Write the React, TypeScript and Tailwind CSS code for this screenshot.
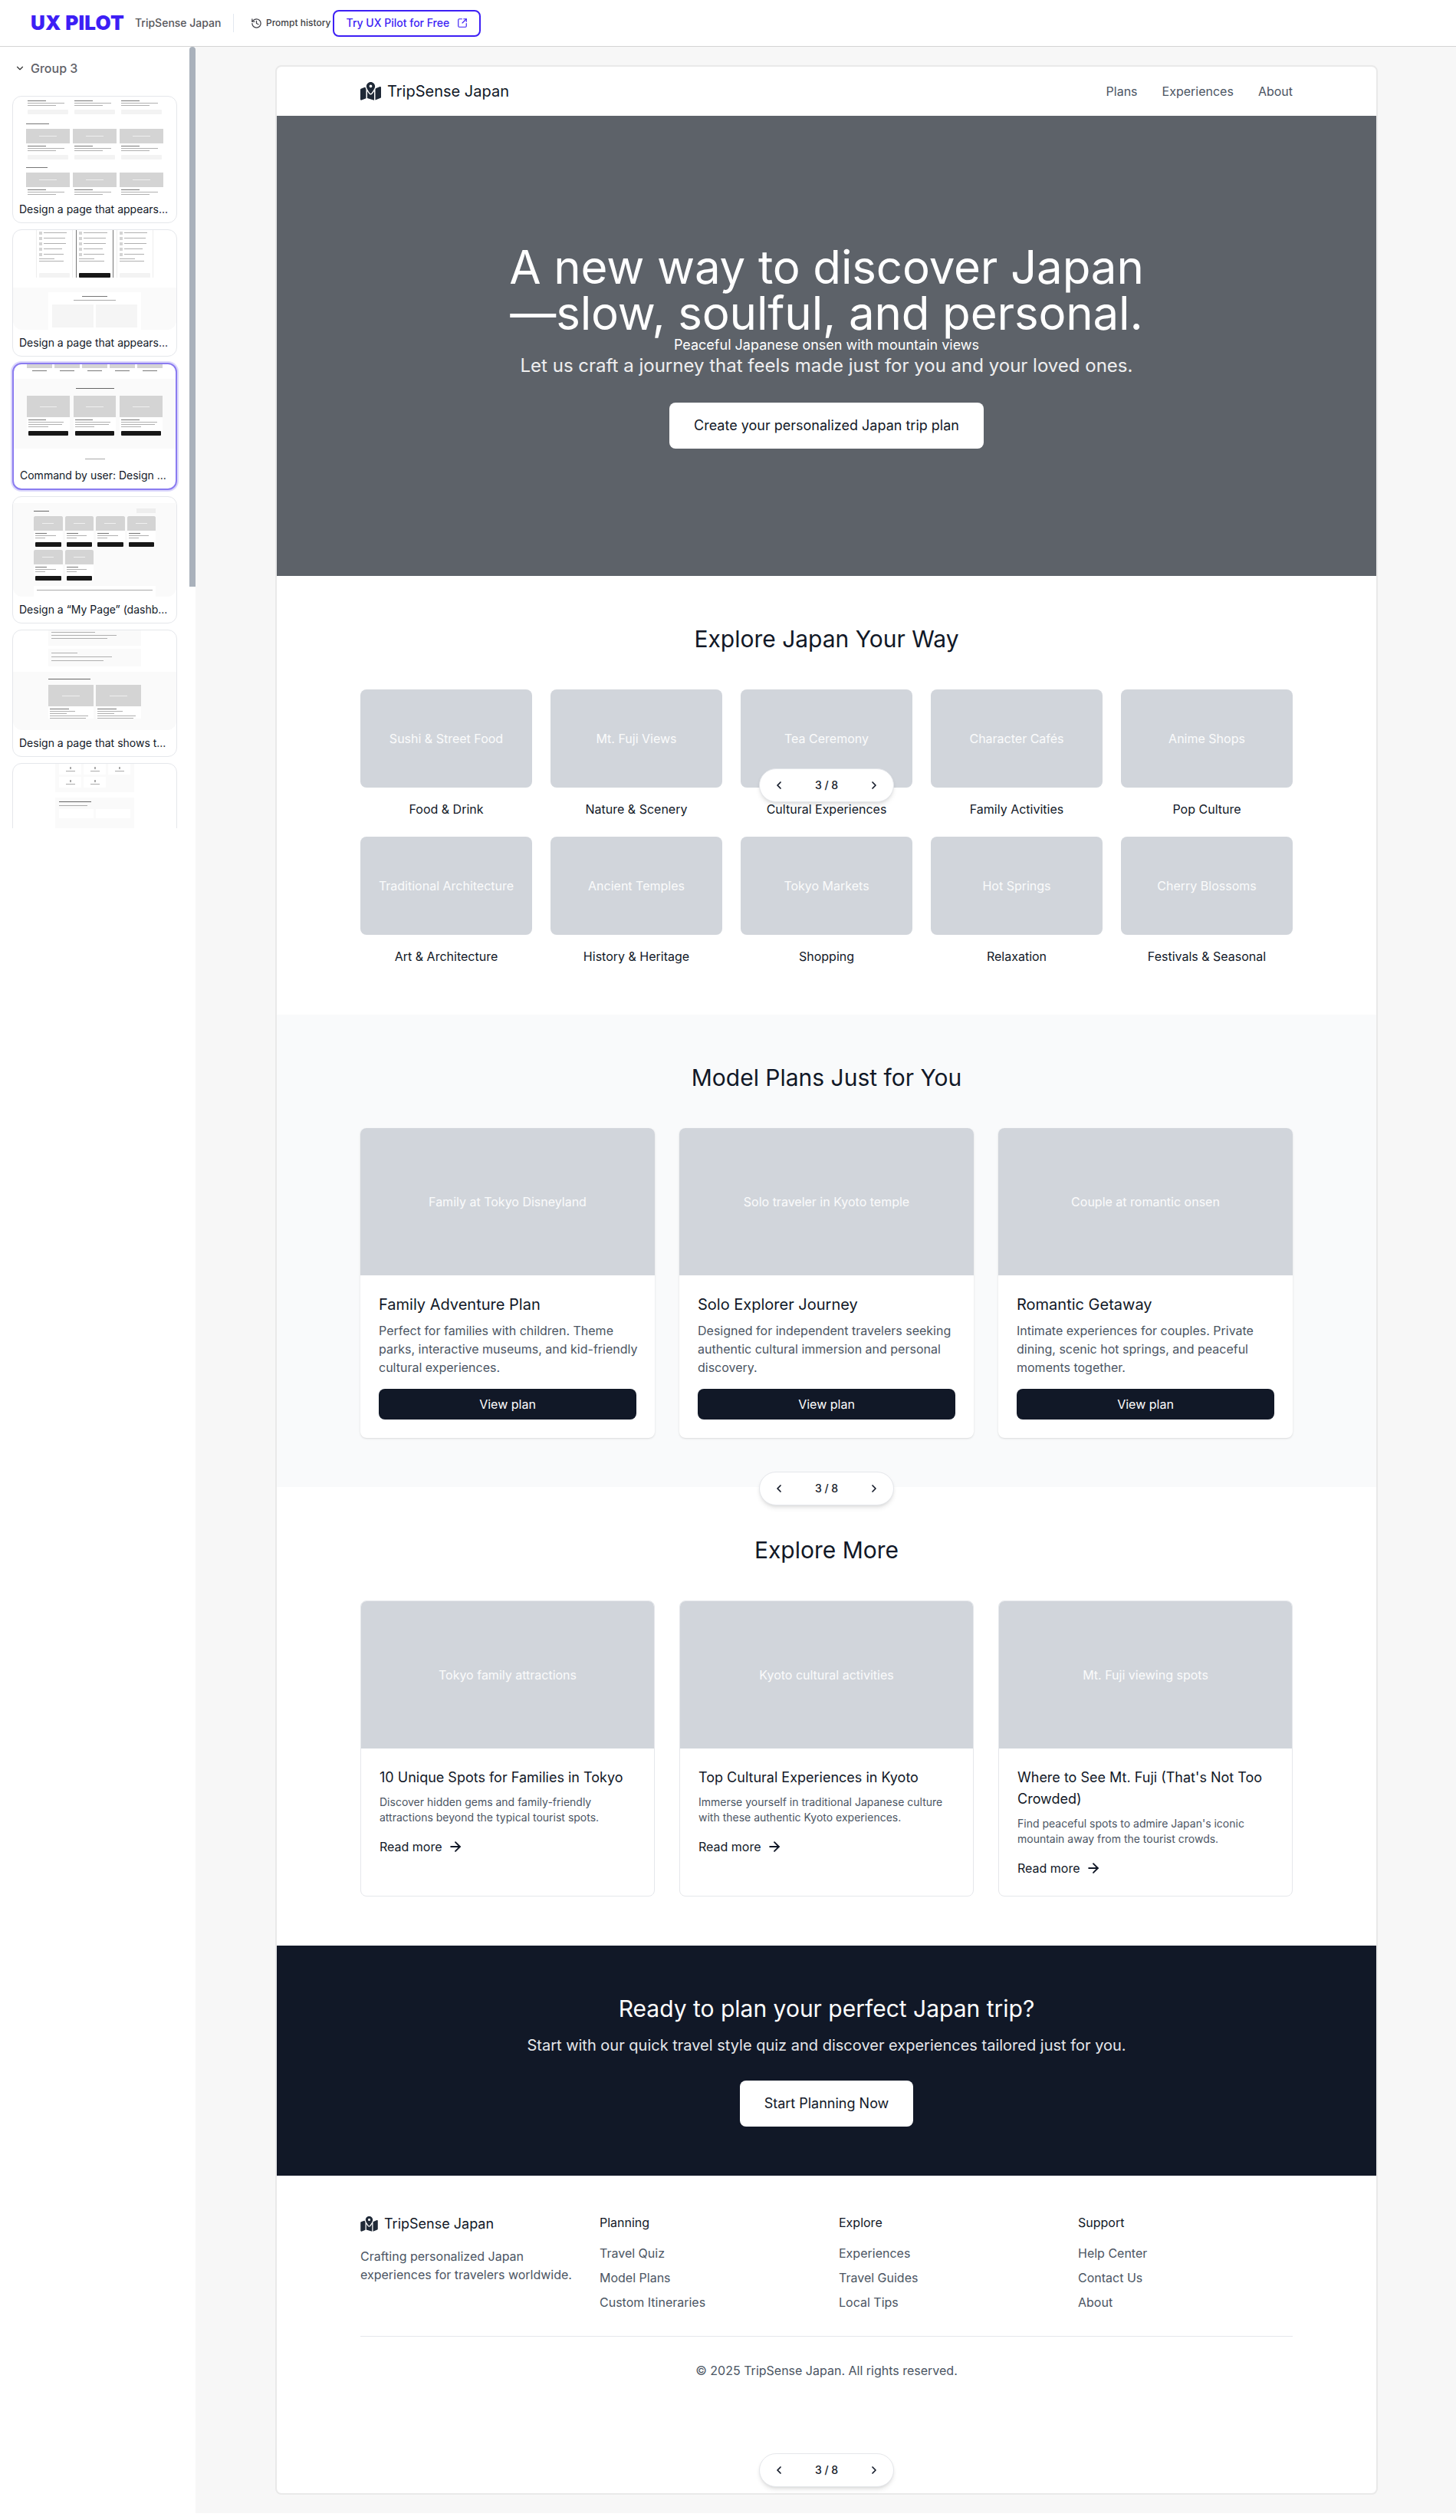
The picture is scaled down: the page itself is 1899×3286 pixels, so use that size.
import { ArrowRight, ChevronDown, ChevronLeft, ChevronRight, History, SquareArrowOutUpRight } from 'lucide-react';
import { FaMapLocationDot } from 'react-icons/fa6';

// tiny stand-ins for the text inside the sidebar previews
function Bars({ rows, className = '' }: { rows: string[]; className?: string }) {
  return (
    <div className={`flex flex-col gap-[2px] ${className}`}>
      {rows.map((w, i) => (
        <div key={i} className="h-px bg-[#b0b0b0]" style={{ width: w }} />
      ))}
    </div>
  );
}

function MiniCard({ img, btn, rows = ['90%', '70%'], dark }: { img?: string; btn?: boolean; rows?: string[]; dark?: boolean }) {
  return (
    <div className="bg-white min-w-0">
      {img && <div className={`bg-[#d4d4d4] flex items-center justify-center ${img}`}><div className="h-px w-[40%] bg-[#f0f0f0]" /></div>}
      <div className="px-[2px] pt-[3px]">
        <div className="h-px w-[45%] bg-[#777] mb-[2px]" />
        <Bars rows={rows} />
        {btn && <div className={`h-[6px] mt-[5px] rounded-[1px] ${dark ? 'bg-[#171717]' : 'bg-[#f3f3f3]'}`} />}
      </div>
    </div>
  );
}

function ThumbOne() {
  return (
    <div className="px-[17px] flex flex-col">
      <div className="grid grid-cols-3 gap-[4px] pt-[2px]">
        <MiniCard btn />
        <MiniCard btn />
        <MiniCard btn />
      </div>
      <div className="h-px w-[30px] bg-[#777] mt-[12px]" />
      <div className="grid grid-cols-3 gap-[4px] mt-[6px]">
        <MiniCard img="h-[19px]" btn />
        <MiniCard img="h-[19px]" btn />
        <MiniCard img="h-[19px]" btn />
      </div>
      <div className="h-px w-[28px] bg-[#777] mt-[10px]" />
      <div className="grid grid-cols-3 gap-[4px] mt-[6px]">
        <MiniCard img="h-[19px]" />
        <MiniCard img="h-[19px]" />
        <MiniCard img="h-[19px]" />
      </div>
    </div>
  );
}

function PriceCol({ dark }: { dark?: boolean }) {
  return (
    <div className={`px-[3px] flex flex-col h-[62px] ${dark ? 'border-x border-[#777]' : 'border-x border-[#eee]'}`}>
      {['75%', '70%', '72%', '60%', '65%'].map((w, i) => (
        <div key={i} className="flex items-center gap-[2px] h-[7px]">
          <div className="w-[4px] h-[4px] bg-[#d4d4d4]" />
          <div className="h-px bg-[#b0b0b0]" style={{ width: w }} />
        </div>
      ))}
      <Bars rows={['50%', '80%']} className="mt-[2px]" />
      <div className={`h-[6px] mt-auto rounded-[1px] ${dark ? 'bg-[#171717]' : 'bg-[#f3f3f3]'}`} />
    </div>
  );
}

function ThumbTwo() {
  return (
    <div className="flex flex-col h-full">
      <div className="grid grid-cols-3 gap-[4px] px-[30px] h-[75px]">
        <PriceCol />
        <PriceCol dark />
        <PriceCol />
      </div>
      <div className="bg-[#fafafa] flex-1 rounded-b-xl px-[46px] pt-[6px]">
        <div className="bg-white h-full px-[5px] pt-[5px]">
          <div className="h-px w-[30%] bg-[#777] mx-auto" />
          <div className="h-px w-[50%] bg-[#aaa] mx-auto mt-[4px]" />
          <div className="grid grid-cols-2 gap-[3px] mt-[5px]">
            <div className="bg-[#f5f5f5] h-[30px]" />
            <div className="bg-[#f5f5f5] h-[30px]" />
          </div>
        </div>
      </div>
    </div>
  );
}

function ThumbThree() {
  const Item = () => (
    <div className="min-w-0">
      <div className="h-[5px] bg-[#d4d4d4]" />
      <div className="h-px w-[60%] bg-[#777] mx-auto mt-[3px]" />
    </div>
  );
  return (
    <div className="flex flex-col h-full">
      <div className="grid grid-cols-5 gap-[3px] px-[17px] h-[19px]">
        <Item />
        <Item />
        <Item />
        <Item />
        <Item />
      </div>
      <div className="bg-[#fafafa] px-[17px] h-[91px] pt-[12px]">
        <div className="h-px w-[50px] bg-[#666] mx-auto" />
        <div className="grid grid-cols-3 gap-[5px] mt-[9px]">
          <MiniCard img="h-[28px]" btn dark rows={['90%', '85%', '50%']} />
          <MiniCard img="h-[28px]" btn dark rows={['90%', '85%', '50%']} />
          <MiniCard img="h-[28px]" btn dark rows={['90%', '85%', '50%']} />
        </div>
      </div>
      <div className="h-px w-[26px] bg-[#aaa] mx-auto mt-[13px]" />
    </div>
  );
}

function ThumbFour() {
  return (
    <div className="flex flex-col h-full">
      <div className="h-[15px]" />
      <div className="bg-[#fafafa] flex-1 rounded-b-xl px-[27px] pt-[7px]">
        <div className="flex items-center justify-between h-[6px]">
          <div className="h-px w-[20px] bg-[#666]" />
          <div className="h-[6px] w-[25px] bg-[#eee]" />
        </div>
        <div className="grid grid-cols-4 gap-x-[3px] gap-y-[4px] mt-[4px]">
          {[0, 1, 2, 3, 4, 5].map((i) => (
            <MiniCard key={i} img="h-[19px] rounded-t-[2px]" btn dark rows={['80%', '40%']} />
          ))}
        </div>
        <div className="bg-white h-[14px] mt-[7px] px-[4px] pt-[5px]">
          <div className="h-px w-full bg-[#aaa]" />
        </div>
      </div>
    </div>
  );
}

function ThumbFive() {
  return (
    <div className="flex flex-col h-full">
      <div className="px-[46px]">
        <div className="bg-[#fafafa] h-[20px] px-[4px] pt-[2px]">
          <Bars rows={['50%', '75%', '65%']} className="gap-[3px]" />
        </div>
        <div className="bg-[#fafafa] h-[23px] mt-[4px] px-[4px] pt-[5px]">
          <Bars rows={['30%', '70%', '60%']} className="gap-[4px]" />
        </div>
      </div>
      <div className="bg-[#fafafa] flex-1 rounded-b-xl mt-[7px] px-[46px] pt-[9px]">
        <div className="h-px w-[55px] bg-[#666]" />
        <div className="grid grid-cols-2 gap-[3px] mt-[7px]">
          <MiniCard img="h-[28px]" rows={['60%', '40%', '90%', '85%']} />
          <MiniCard img="h-[28px]" rows={['60%', '40%', '90%', '85%']} />
        </div>
      </div>
    </div>
  );
}

function ThumbSix() {
  return (
    <div className="px-[55px]">
      <div className="bg-[#fafafa] px-[5px] pb-[6px] grid grid-cols-3 gap-[3px]">
        {[0, 1, 2, 3, 4].map((i) => (
          <div key={i} className="bg-white h-[14px] flex flex-col items-center justify-center gap-[2px]">
            <div className="h-[3px] w-[2px] bg-[#aaa]" />
            <div className="h-px w-[12px] bg-[#aaa]" />
          </div>
        ))}
      </div>
      <div className="bg-[#fafafa] mt-[7px] px-[5px] pt-[5px] h-[40px]">
        <div className="h-px w-[45%] bg-[#666]" />
        <div className="h-px w-[40%] bg-[#aaa] mt-[4px]" />
        <div className="grid grid-cols-2 gap-[3px] mt-[4px]">
          <div className="bg-white h-[12px]" />
          <div className="bg-white h-[12px]" />
        </div>
      </div>
    </div>
  );
}

function Thumb({ caption, active, children }: { caption: string; active?: boolean; children: React.ReactNode }) {
  return (
    <div
      className={`w-[215px] h-[166px] shrink-0 rounded-xl bg-white overflow-hidden flex flex-col ${
        active ? 'border-2 border-[#8b7cf0] ring-2 ring-[#dcd8fb]' : 'border border-[#e5e7eb]'
      }`}
    >
      <div className="h-[130px] overflow-hidden">{children}</div>
      <div className="px-2 h-[34px] flex items-center text-sm text-[#111827] whitespace-nowrap">{caption}</div>
    </div>
  );
}

function Sidebar() {
  return (
    <aside className="relative w-[255px] h-[1019px] shrink-0 bg-white overflow-hidden px-4">
      <div className="flex items-center gap-[7px] h-[28px] pl-[3px] mt-[14px] text-base font-medium text-[#5f6168]">
        <ChevronDown className="w-[14px] h-[14px] text-[#333]" />
        Group 3
      </div>
      <div className="flex flex-col gap-2 mt-[22px]">
        <Thumb caption="Design a page that appears..."><ThumbOne /></Thumb>
        <Thumb caption="Design a page that appears..."><ThumbTwo /></Thumb>
        <Thumb caption="Command by user: Design ..." active><ThumbThree /></Thumb>
        <Thumb caption="Design a “My Page” (dashb..."><ThumbFour /></Thumb>
        <Thumb caption="Design a page that shows t..."><ThumbFive /></Thumb>
        <Thumb caption=""><ThumbSix /></Thumb>
      </div>
      <div className="absolute right-0 top-0 w-2 h-[704px] rounded-t-full rounded-b-sm bg-[#a9b1bb]" />
    </aside>
  );
}

function TopBar() {
  return (
    <header className="h-[61px] bg-white border-b border-[#d4d4d4] flex items-center pl-10">
      <span className="text-[26px] font-black text-[#3d1ff5] tracking-[0.01em] w-[136px] leading-none">UX PILOT</span>
      <span className="text-sm font-medium text-[#57575b] w-[128px]">TripSense Japan</span>
      <div className="w-px h-6 bg-[#e2e8f0]" />
      <History className="w-[15px] h-[15px] text-[#3f3f46] ml-[22px]" />
      <span className="text-xs font-medium text-[#3f3f46] ml-[5px]">Prompt history</span>
      <div className="ml-[3px] w-[193px] h-[35px] rounded-lg border-2 border-[#3d1ff5] flex items-center justify-center gap-[10px] text-sm font-medium text-[#3d1ff5]">
        Try UX Pilot for Free
        <SquareArrowOutUpRight className="w-[14px] h-[14px]" />
      </div>
    </header>
  );
}

function Pager({ className }: { className: string }) {
  return (
    <div className={`absolute left-1/2 -translate-x-1/2 w-[176px] h-[44px] rounded-full bg-white border border-[#e5e7eb] shadow-md flex items-center justify-between px-[17px] text-sm font-medium text-[#111827] ${className}`}>
      <ChevronLeft className="w-4 h-4" strokeWidth={2.5} />
      <span>3 / 8</span>
      <ChevronRight className="w-4 h-4" strokeWidth={2.5} />
    </div>
  );
}

function Placeholder({ label, className }: { label: string; className: string }) {
  return <div className={`bg-[#d1d5db] flex items-center justify-center text-white/90 ${className}`}>{label}</div>;
}

const categories = [
  ['Sushi & Street Food', 'Food & Drink'],
  ['Mt. Fuji Views', 'Nature & Scenery'],
  ['Tea Ceremony', 'Cultural Experiences'],
  ['Character Cafés', 'Family Activities'],
  ['Anime Shops', 'Pop Culture'],
  ['Traditional Architecture', 'Art & Architecture'],
  ['Ancient Temples', 'History & Heritage'],
  ['Tokyo Markets', 'Shopping'],
  ['Hot Springs', 'Relaxation'],
  ['Cherry Blossoms', 'Festivals & Seasonal'],
];

const plans = [
  ['Family at Tokyo Disneyland', 'Family Adventure Plan', 'Perfect for families with children. Theme parks, interactive museums, and kid-friendly cultural experiences.'],
  ['Solo traveler in Kyoto temple', 'Solo Explorer Journey', 'Designed for independent travelers seeking authentic cultural immersion and personal discovery.'],
  ['Couple at romantic onsen', 'Romantic Getaway', 'Intimate experiences for couples. Private dining, scenic hot springs, and peaceful moments together.'],
];

const guides = [
  ['Tokyo family attractions', '10 Unique Spots for Families in Tokyo', 'Discover hidden gems and family-friendly attractions beyond the typical tourist spots.'],
  ['Kyoto cultural activities', 'Top Cultural Experiences in Kyoto', 'Immerse yourself in traditional Japanese culture with these authentic Kyoto experiences.'],
  ['Mt. Fuji viewing spots', "Where to See Mt. Fuji (That's Not Too Crowded)", "Find peaceful spots to admire Japan's iconic mountain away from the tourist crowds."],
];

const footerCols = [
  ['Planning', 'Travel Quiz', 'Model Plans', 'Custom Itineraries'],
  ['Explore', 'Experiences', 'Travel Guides', 'Local Tips'],
  ['Support', 'Help Center', 'Contact Us', 'About'],
];

function Preview() {
  return (
    <div className="relative w-[1438px] bg-white border-2 border-[#e9e9e9] rounded-lg overflow-hidden text-[#111827]">
      <nav className="h-[64px] flex items-center justify-between px-[109px]">
        <div className="flex items-center gap-2 text-xl">
          <FaMapLocationDot className="w-[27px] h-6 text-[#1f2937]" />
          TripSense Japan
        </div>
        <div className="flex gap-8 text-[#4b5563]">
          <span>Plans</span>
          <span>Experiences</span>
          <span>About</span>
        </div>
      </nav>

      {/* hero */}
      <section className="h-[600px] bg-[#5d6269] flex flex-col items-center justify-center text-white text-center">
        <h1 className="text-6xl leading-[60px] tracking-[-0.15px] w-[896px]">A new way to discover Japan —slow, soulful, and personal.</h1>
        <p className="text-lg leading-[23px]">Peaceful Japanese onsen with mountain views</p>
        <p className="text-2xl text-white/90 mb-8">Let us craft a journey that feels made just for you and your loved ones.</p>
        <div className="bg-white text-[#111827] text-lg px-8 py-4 rounded-lg">Create your personalized Japan trip plan</div>
      </section>

      {/* categories */}
      <section className="py-16 px-[109px]">
        <h2 className="text-3xl text-center mb-12">Explore Japan Your Way</h2>
        <div className="grid grid-cols-5 gap-6">
          {categories.map(([img, label]) => (
            <div key={label} className="text-center">
              <Placeholder label={img} className="h-32 rounded-lg mb-4" />
              <div>{label}</div>
            </div>
          ))}
        </div>
      </section>

      {/* plans */}
      <section className="py-16 px-[109px] bg-[#f9fafb]">
        <h2 className="text-3xl text-center mb-12">Model Plans Just for You</h2>
        <div className="grid grid-cols-3 gap-8">
          {plans.map(([img, title, text]) => (
            <div key={title} className="bg-white rounded-lg shadow-sm overflow-hidden">
              <Placeholder label={img} className="h-48" />
              <div className="p-6">
                <h3 className="text-xl leading-7 mb-2">{title}</h3>
                <p className="text-[#4b5563] mb-4 -mr-1">{text}</p>
                <div className="h-10 rounded-lg bg-[#111827] text-white flex items-center justify-center">View plan</div>
              </div>
            </div>
          ))}
        </div>
      </section>

      {/* guides */}
      <section className="py-16 px-[109px]">
        <h2 className="text-3xl text-center mb-12">Explore More</h2>
        <div className="grid grid-cols-3 gap-8">
          {guides.map(([img, title, text]) => (
            <div key={title} className="bg-white rounded-lg border border-[#e5e7eb] overflow-hidden">
              <Placeholder label={img} className="h-48" />
              <div className="p-6">
                <h3 className="text-lg mb-2">{title}</h3>
                <p className="text-sm text-[#4b5563] mb-4">{text}</p>
                <div className="flex items-center gap-[7px]">
                  Read more
                  <ArrowRight className="w-5 h-5" strokeWidth={2.25} />
                </div>
              </div>
            </div>
          ))}
        </div>
      </section>

      {/* cta */}
      <section className="py-16 bg-[#111827] text-white text-center flex flex-col items-center">
        <h2 className="text-3xl mb-4">Ready to plan your perfect Japan trip?</h2>
        <p className="text-xl leading-7 text-[#e5e7eb] mb-8">Start with our quick travel style quiz and discover experiences tailored just for you.</p>
        <div className="bg-white text-[#111827] text-lg px-8 py-4 rounded-lg">Start Planning Now</div>
      </section>

      {/* footer */}
      <footer className="px-[109px] pt-[49px] pb-[148px]">
        <div className="grid grid-cols-4 gap-8">
          <div>
            <div className="flex items-center gap-2 text-lg mb-4">
              <FaMapLocationDot className="w-[23px] h-5 text-[#1f2937]" />
              TripSense Japan
            </div>
            <p className="text-[#4b5563]">Crafting personalized Japan experiences for travelers worldwide.</p>
          </div>
          {footerCols.map(([head, ...links]) => (
            <div key={head}>
              <h4 className="mb-4">{head}</h4>
              <div className="flex flex-col gap-2 text-[#4b5563]">
                {links.map((l) => (
                  <span key={l}>{l}</span>
                ))}
              </div>
            </div>
          ))}
        </div>
        <div className="border-t border-[#e5e7eb] mt-8 pt-8 text-center text-[#4b5563]">© 2025 TripSense Japan. All rights reserved.</div>
      </footer>

      <Pager className="top-[915px]" />
      <Pager className="top-[1832px]" />
      <Pager className="top-[3112px]" />
    </div>
  );
}

export default function App() {
  return (
    <div className="font-['Inter',sans-serif]">
      <TopBar />
      <div className="flex items-start">
        <Sidebar />
        <main className="flex-1 bg-[#f7f7f7] pt-6 pb-[24px] pl-[104px]">
          <Preview />
        </main>
      </div>
    </div>
  );
}
